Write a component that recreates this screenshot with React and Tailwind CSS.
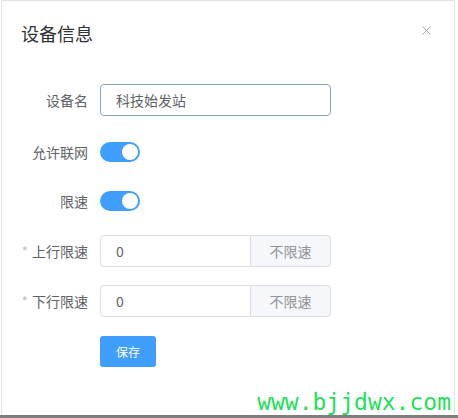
import React from 'react';
import { X } from 'lucide-react';

// 表单里的开关（已打开的状态）
function Toggle() {
  return (
    <div className="w-[40px] h-[20px] rounded-full bg-[#409eff] flex items-center justify-end px-[2px]">
      <div className="w-[16px] h-[16px] rounded-full bg-white" />
    </div>
  );
}

function Row({ label, required, children, className = '' }) {
  return (
    <div className={`flex items-center h-[32px] ${className}`}>
      <div className="w-[80px] pr-[12px] text-right text-[14px] text-[#606266] whitespace-nowrap">
        {required && <span className="text-[#c4c4c4] mr-[4px]">*</span>}
        {label}
      </div>
      {children}
    </div>
  );
}

function LimitInput() {
  return (
    <div className="flex w-[231px] h-[32px] text-[14px]">
      <div className="flex-1 border border-[#dcdfe6] rounded-l-[4px] flex items-center pl-[15px] text-[#606266]">0</div>
      <div className="w-[80px] border border-l-0 border-[#dcdfe6] rounded-r-[4px] bg-[#f5f7fa] flex items-center justify-center text-[#909399]">
        不限速
      </div>
    </div>
  );
}

export default function App() {
  return (
    <div
      className="w-[458px] h-[418px] bg-white overflow-hidden flex flex-col"
      style={{ fontFamily: '"Noto Sans CJK SC", "Noto Sans", sans-serif' }}
    >
      <div className="relative flex-1 ml-[1px] mr-[3px] border-l border-t border-r border-[#e3e3e3]">
        {/* 标题栏 */}
        <div className="flex items-center justify-between pl-[19px] pr-[20px] pt-[20px] h-[44px]">
          <span className="text-[18px] leading-[24px] text-[#303133]">设备信息</span>
          <X size={15} strokeWidth={1.3} className="text-[#909399] -mt-[6px]" />
        </div>

        {/* 表单 */}
        <div className="pl-[18px] pt-[39px]">
          <Row label="设备名">
            <div className="w-[231px] h-[32px] border border-[#86a9bf] rounded-[4px] flex items-center pl-[15px] text-[14px] text-[#606266]">
              科技始发站
            </div>
          </Row>
          <Row label="允许联网" className="mt-[20px]">
            <Toggle />
          </Row>
          <Row label="限速" className="mt-[17px]">
            <Toggle />
          </Row>
          <Row label="上行限速" required className="mt-[18px]">
            <LimitInput />
          </Row>
          <Row label="下行限速" required className="mt-[18px]">
            <LimitInput />
          </Row>
          <div className="flex mt-[19px]">
            <div className="w-[80px]" />
            <button className="w-[56px] h-[31px] rounded-[3px] bg-[#409eff] text-white text-[12px]">保存</button>
          </div>
        </div>

        {/* 水印 */}
        <div
          className="absolute right-[3px] bottom-[1px] text-[23px] leading-[23px] text-[#22e05a]"
          style={{ fontFamily: '"DejaVu Sans Mono", monospace' }}
        >
          www.bjjdwx.com
        </div>
      </div>
      <div className="h-[3px] bg-[#7d7d7d]" />
    </div>
  );
}
